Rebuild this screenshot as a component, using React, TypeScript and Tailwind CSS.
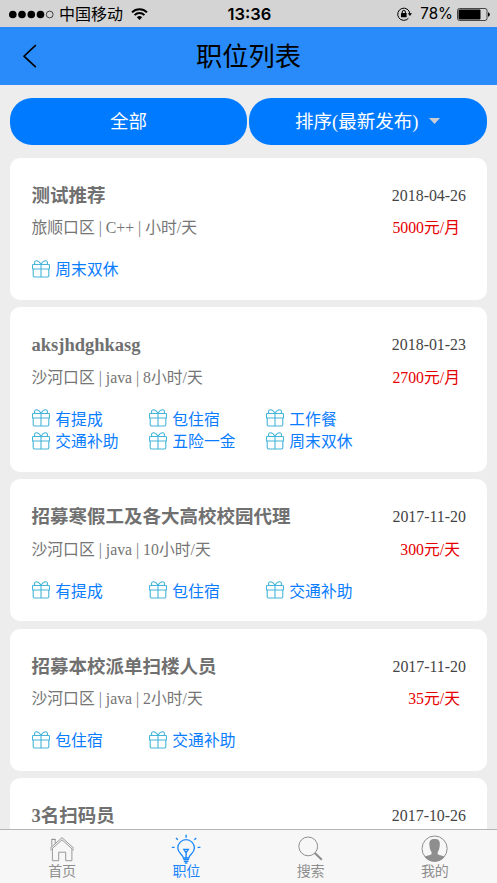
// Job list screen with filter bar and bottom tabs

import type { ReactNode } from 'react'

interface Job {
  title: string
  date: string
  info?: string
  salary?: string
  perks: string[]
}

const jobs: Job[] = [
  { title: '测试推荐', date: '2018-04-26', info: '旅顺口区 | C++ | 小时/天', salary: '5000元/月', perks: ['周末双休'] },
  {
    title: 'aksjhdghkasg',
    date: '2018-01-23',
    info: '沙河口区 | java | 8小时/天',
    salary: '2700元/月',
    perks: ['有提成', '包住宿', '工作餐', '交通补助', '五险一金', '周末双休'],
  },
  {
    title: '招募寒假工及各大高校校园代理',
    date: '2017-11-20',
    info: '沙河口区 | java | 10小时/天',
    salary: '300元/天',
    perks: ['有提成', '包住宿', '交通补助'],
  },
  {
    title: '招募本校派单扫楼人员',
    date: '2017-11-20',
    info: '沙河口区 | java | 2小时/天',
    salary: '35元/天',
    perks: ['包住宿', '交通补助'],
  },
  { title: '3名扫码员', date: '2017-10-26', perks: [] },
]

function GiftIcon() {
  return (
    <svg className="mb-[2px] h-[18px] w-[18px] shrink-0" viewBox="0 0 18 18" fill="none" stroke="#45b5d9" strokeWidth="1.1">
      <rect x="0.5" y="4.5" width="17" height="4.5" rx="0.8" />
      <path d="M1.2 9v6.8q0 1.2 1.2 1.2h13.2q1.2 0 1.2-1.2V9M9 4.5V17" />
      <path d="M9 4.3C7.6 1.8 5.8.7 4.2.8 2.5 1 2 2.8 2.9 4.3M9 4.3C10.4 1.8 12.2.7 13.8.8c1.7.2 2.2 2 1.3 3.5" />
    </svg>
  )
}

function StatusBar() {
  return (
    <div className="flex h-[26.5px] shrink-0 items-center bg-[#d4d4d4] pl-[9px] pr-[7px] pt-[2px] font-['Inter','Noto_Sans_CJK_SC',sans-serif] text-black">
      <div className="flex flex-1 items-center">
        <svg className="h-[9px] w-[45px]" viewBox="0 0 45 9">
          <circle cx="3.8" cy="4.5" r="3.8" />
          <circle cx="13" cy="4.5" r="3.8" />
          <circle cx="22.3" cy="4.5" r="3.8" />
          <circle cx="31.5" cy="4.5" r="3.8" />
          <circle cx="40.7" cy="4.5" r="3.4" fill="none" stroke="#000" strokeWidth="0.7" />
        </svg>
        <span className="ml-[5px] text-[16px] leading-[24px]">中国移动</span>
        <svg className="ml-[8px] h-[12px] w-[17px]" viewBox="0 0 17 12" fill="none" stroke="#000" strokeWidth="2">
          <path d="M1 4.4a10.6 10.6 0 0 1 15 0M3.6 7.1a6.9 6.9 0 0 1 9.8 0" />
          <path d="M5.8 9.3a3.9 3.9 0 0 1 5.4 0L8.5 12z" fill="#000" stroke="none" />
        </svg>
      </div>
      <span className="text-[16.5px] font-semibold">13:36</span>
      <div className="flex flex-1 items-center justify-end">
        <svg className="h-[14px] w-[15px]" viewBox="0 0 15 14" fill="none" stroke="#000" strokeWidth="1">
          <path d="M11.4 11.3A6.1 6.1 0 1 1 12.9 6.6" />
          <path d="M10.8 6.2h4.2L12.9 9z" fill="#000" stroke="none" />
          <rect x="4" y="6" width="5.6" height="4.2" rx="0.4" fill="#000" stroke="none" />
          <path d="M5.2 6.2V5a1.6 1.6 0 0 1 3.2 0v1.2" />
        </svg>
        <span className="ml-[8px] text-[15.2px]">78%</span>
        <svg className="ml-[4px] h-[13px] w-[33px]" viewBox="0 0 33 13">
          <rect x="0.5" y="0.5" width="29.5" height="12" rx="2" fill="none" stroke="#222" strokeWidth="0.8" />
          <rect x="1.5" y="1.5" width="22" height="10" rx="1" />
          <path d="M31 4.2q1.8.5 1.8 2.3T31 8.8z" />
        </svg>
      </div>
    </div>
  )
}

function JobCard({ job }: { job: Job }) {
  return (
    <div className="shrink-0 rounded-[10px] bg-white pb-[18.5px] pl-[21.5px] pr-[21px] pt-[26px]">
      <div className="flex h-[24px] items-center justify-between">
        <h2 className="text-[18.5px] font-bold leading-[24px] text-[#707070]">{job.title}</h2>
        <span className="text-[15.9px] leading-[24px] text-[#444]">{job.date}</span>
      </div>
      <div className="mt-[8.5px] flex h-[23px] items-center justify-between">
        <span className="text-[15.8px] leading-[23px] text-[#757575]">{job.info}</span>
        <span className="pr-[6px] text-[15.8px] leading-[23px] text-[#e60000]">{job.salary}</span>
      </div>
      <div className="mt-[19.5px] grid grid-cols-[117px_117px_117px]">
        {job.perks.map((perk) => (
          <div key={perk} className="flex h-[22.5px] items-center gap-[5.8px]">
            <GiftIcon />
            <span className="pt-px text-[15.8px] leading-[22px] text-[#0a7cff]">{perk}</span>
          </div>
        ))}
      </div>
    </div>
  )
}

function Tab({ label, active, children }: { label: string; active?: boolean; children: ReactNode }) {
  return (
    <div className={active ? 'flex flex-1 flex-col items-center text-[#1a86fa]' : 'flex flex-1 flex-col items-center text-[#8e8e8e]'}>
      <svg className="mt-[4px] h-[30px] w-[30px] shrink-0 overflow-visible" viewBox="0 0 30 30" fill="none" stroke="currentColor">
        {children}
      </svg>
      <span className="text-[14px] leading-[16px]">{label}</span>
    </div>
  )
}

export default function App() {
  return (
    <div className="flex h-[883px] w-[497px] flex-col overflow-hidden bg-[#ededed] font-['Liberation_Serif','Noto_Sans_CJK_SC',serif]">
      <StatusBar />
      <header className="grid h-[58.5px] shrink-0 grid-cols-[60px_1fr_60px] items-center bg-[#288bf9]">
        <svg className="ml-[22px] mt-px h-[24px] w-[15px]" viewBox="0 0 15 24" fill="none" stroke="#000" strokeWidth="1.6">
          <path d="M13.8 1.2 2 12.2l11.8 10.9" />
        </svg>
        <h1 className="pt-[4px] text-center text-[26.3px] font-normal leading-[36px] text-black">职位列表</h1>
      </header>

      {/* Filters */}
      <div className="mx-[10px] mt-[13px] flex h-[46.5px] shrink-0 gap-[1.5px] text-[18.5px] text-white">
        <button className="w-[237px] rounded-[22px] bg-[#007aff] pt-[3px]">全部</button>
        <button className="flex flex-1 items-center justify-center gap-[11px] rounded-[22px] bg-[#007aff]">
          <span className="pt-[3px]">排序(最新发布)</span>
          <svg className="h-[6px] w-[11px]" viewBox="0 0 11 6" fill="#c9cdd2">
            <path d="M0 0h11L5.5 6z" />
          </svg>
        </button>
      </div>

      {/* Job list */}
      <div className="mx-[10px] mt-[13px] flex min-h-0 flex-1 flex-col gap-[7.5px] overflow-hidden">
        {jobs.map((job) => (
          <JobCard key={job.title} job={job} />
        ))}
      </div>

      <nav className="flex h-[54px] shrink-0 border-t border-[#b5b5b5] bg-[#f7f7f7]">
        <Tab label="首页">
          <path d="M3 14.4 15 3.6l12 10.8M3.2 16.4 15 5.8l11.8 10.6M5.4 14.7v12h6.3v-8.5h7v8.5h6.2v-12M4.8 12.4V5.4h3.4v4M4.3 5.4h4.4" strokeWidth="0.9" />
        </Tab>
        <Tab label="职位" active>
          <path d="M12.4 24c0-3-5.6-4.6-5.6-10a8.3 8.3 0 0 1 16.6 0c0 5.4-5.6 7-5.6 10z" strokeWidth="1.3" />
          <path d="M12.2 25.4H18M12.8 27.2h4.6M13.8 29h2.6M15.1 24v-5.6M15.1 18.8l-2.2-3.4h4.4z" strokeWidth="1.4" />
          <path d="M15.1 3.8V.8M6.8 5.8 5 4M23.4 5.8 25.2 4M3.6 13.4H.8M26.6 13.4h2.8" strokeWidth="1.4" />
        </Tab>
        <Tab label="搜索">
          <circle cx="12.2" cy="12.4" r="9.4" strokeWidth="1" />
          <path d="m18.8 19 7 6.8" strokeWidth="2.1" />
        </Tab>
        <Tab label="我的">
          <circle cx="14.6" cy="14.6" r="12.6" strokeWidth="1" />
          <path d="M14.6 5c4 0 5.6 1.9 5.2 6-.2 3.4-.9 5.4-2.1 6.9v2.3c2 1.3 4.8 1.3 7 2.6a12.6 12.6 0 0 1-20.2 0c2.2-1.3 5-1.3 7-2.6v-2.3c-1.2-1.5-1.9-3.5-2.1-6.9-.4-4.1 1.2-6 5.2-6z" fill="currentColor" stroke="none" />
        </Tab>
      </nav>
    </div>
  )
}
